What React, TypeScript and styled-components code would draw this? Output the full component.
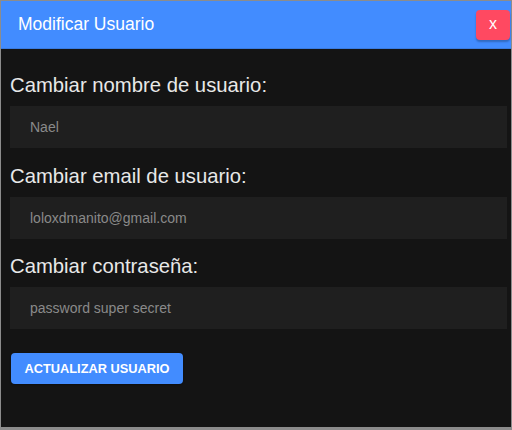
import React from "react";
import styled, { createGlobalStyle } from "styled-components";

const Global = createGlobalStyle`
  html, body { margin: 0; padding: 0; background: #8c8c8c; }
  body { font-family: "Liberation Sans", Arial, sans-serif; }
  * { box-sizing: border-box; }
`;

const Backdrop = styled.div`
  width: 512px;
  height: 430px;
  padding: 1px 1px 3px 1px;
  background: #8c8c8c;
`;

const Modal = styled.div`
  width: 100%;
  height: 100%;
  background: #141414;
  display: flex;
  flex-direction: column;
`;

const Header = styled.div`
  height: 47px;
  background: #428cff;
  display: flex;
  align-items: center;
  justify-content: space-between;
  padding: 0 1px 0 17px;
  box-shadow: 0 1px 0 #3a7be0;
`;

const Title = styled.h1`
  margin: 0;
  font-size: 17.5px;
  font-weight: 400;
  color: #ffffff;
`;

const CloseButton = styled.button`
  width: 34px;
  height: 30px;
  margin-top: 1px;
  border: none;
  border-radius: 4px;
  background: #ff4961;
  color: #ffffff;
  font-family: "Liberation Sans", Arial, sans-serif;
  font-size: 16px;
  box-shadow: 0 2px 2px rgba(0, 0, 0, 0.25);
  padding: 0 0 2px 0;
`;

const Body = styled.div`
  padding: 10px 4px 0 9px;
  display: flex;
  flex-direction: column;
`;

const Label = styled.label`
  display: block;
  margin: 16.5px 0 9px 0;
  font-size: 20.3px;
  line-height: 23px;
  color: #e8e8e8;
  &:first-child {
    margin-top: 16px;
  }
`;

const Field = styled.input`
  height: 42px;
  width: 100%;
  border: none;
  outline: none;
  background: #1f1f1f;
  padding: 0 20px;
  font-family: "Liberation Sans", Arial, sans-serif;
  font-size: 14px;
  color: #8a8a8a;
  &::placeholder { color: #8a8a8a; }
`;

const SubmitButton = styled.button`
  align-self: flex-start;
  margin: 24px 0 0 1px;
  width: 172px;
  height: 31px;
  border: none;
  border-radius: 4px;
  background: #428cff;
  color: #ffffff;
  font-family: "Liberation Sans", Arial, sans-serif;
  font-weight: 700;
  font-size: 12.8px;
  padding: 0;
  box-shadow: 0 1px 2px rgba(0, 0, 0, 0.3);
`;

const fields = [
  { label: "Cambiar nombre de usuario:", value: "Nael" },
  { label: "Cambiar email de usuario:", value: "loloxdmanito@gmail.com" },
  { label: "Cambiar contraseña:", value: "password super secret" },
];

export default function App() {
  return (
    <>
      <Global />
      <Backdrop>
        <Modal>
          <Header>
            <Title>Modificar Usuario</Title>
            <CloseButton>x</CloseButton>
          </Header>
          <Body>
            {fields.map((f) => (
              <React.Fragment key={f.label}>
                <Label>{f.label}</Label>
                <Field placeholder={f.value} />
              </React.Fragment>
            ))}
            <SubmitButton>ACTUALIZAR USUARIO</SubmitButton>
          </Body>
        </Modal>
      </Backdrop>
    </>
  );
}
